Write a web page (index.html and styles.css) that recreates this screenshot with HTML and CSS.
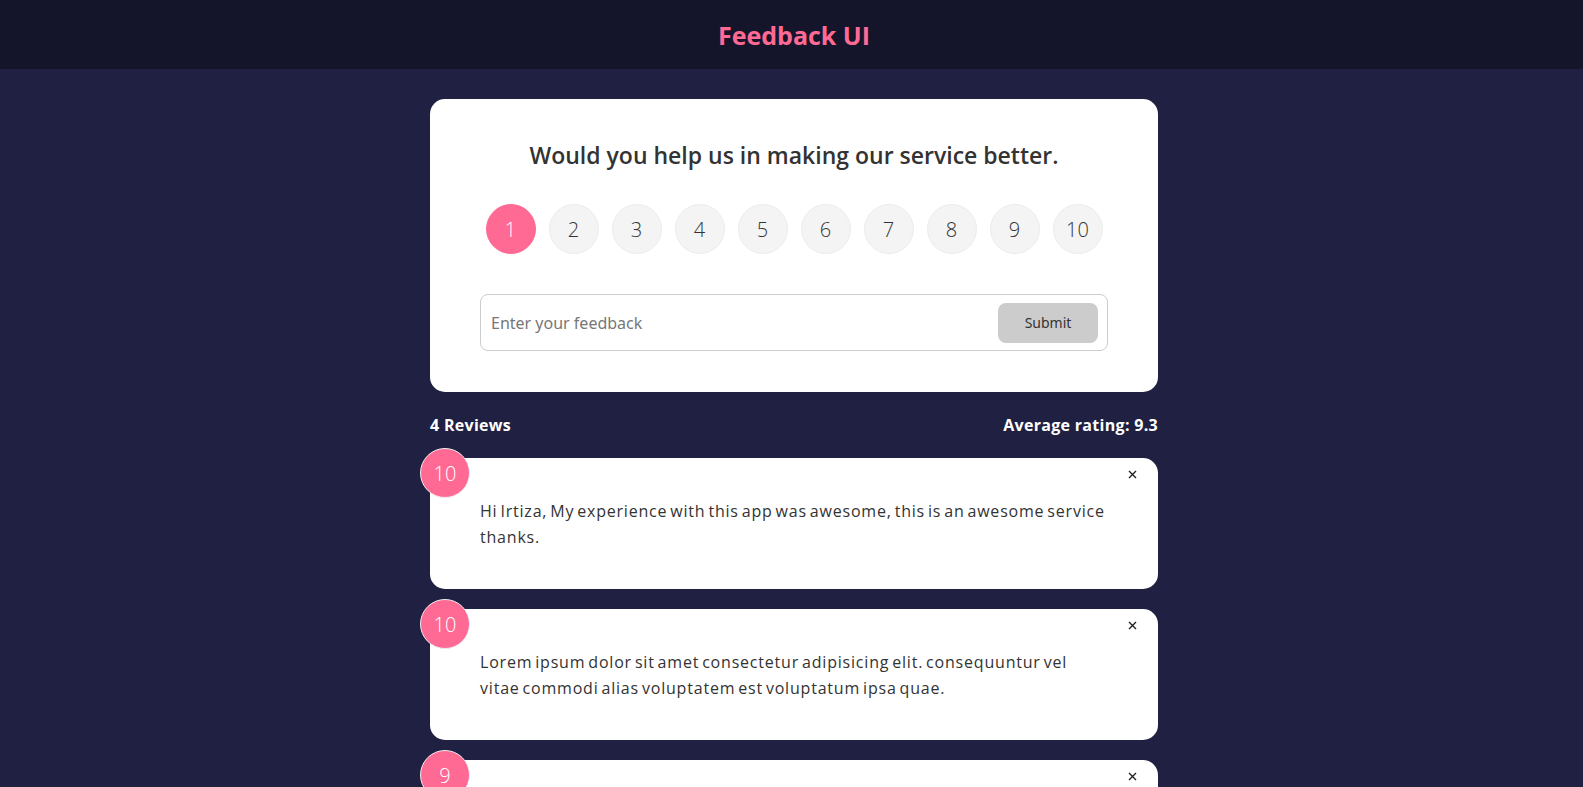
FILE: index.html
```html
<!DOCTYPE html>
<html lang="en">
<head>
<meta charset="UTF-8">
<title>Feedback UI</title>
<link rel="stylesheet" href="styles.css">
</head>
<body>
<header class="topbar">
  <h1 class="brand">Feedback UI</h1>
</header>
<main class="page">
  <div class="container">
    <section class="card rating-card">
      <h2 class="question">Would you help us in making our service better.</h2>
      <ul class="ratings">
        <li class="rate selected">1</li>
        <li class="rate">2</li>
        <li class="rate">3</li>
        <li class="rate">4</li>
        <li class="rate">5</li>
        <li class="rate">6</li>
        <li class="rate">7</li>
        <li class="rate">8</li>
        <li class="rate">9</li>
        <li class="rate">10</li>
      </ul>
      <form class="input-group">
        <input class="feedback-input" type="text" placeholder="Enter your feedback">
        <button class="submit" type="button">Submit</button>
      </form>
    </section>

    <div class="stats">
      <h4>4 Reviews</h4>
      <h4>Average rating: 9.3</h4>
    </div>

    <div class="review card">
      <div class="badge">10</div>
      <button class="close" type="button" aria-label="Remove"><svg width="9" height="9" viewBox="0 0 9 9"><path d="M1 1L8 8M8 1L1 8" stroke="#222" stroke-width="1.4" fill="none"/></svg></button>
      <p class="review-text">Hi Irtiza, My experience with this app was awesome, this is an awesome service thanks.</p>
    </div>

    <div class="review card">
      <div class="badge">10</div>
      <button class="close" type="button" aria-label="Remove"><svg width="9" height="9" viewBox="0 0 9 9"><path d="M1 1L8 8M8 1L1 8" stroke="#222" stroke-width="1.4" fill="none"/></svg></button>
      <p class="review-text">Lorem ipsum dolor sit amet consectetur adipisicing elit. consequuntur vel vitae commodi alias voluptatem est voluptatum ipsa quae.</p>
    </div>

    <div class="review card">
      <div class="badge">9</div>
      <button class="close" type="button" aria-label="Remove"><svg width="9" height="9" viewBox="0 0 9 9"><path d="M1 1L8 8M8 1L1 8" stroke="#222" stroke-width="1.4" fill="none"/></svg></button>
      <p class="review-text">Lorem ipsum dolor sit amet consectetur adipisicing elit. consequuntur vel vitae commodi alias voluptatem est voluptatum ipsa quae.</p>
    </div>

    <div class="review card">
      <div class="badge">8</div>
      <button class="close" type="button" aria-label="Remove"><svg width="9" height="9" viewBox="0 0 9 9"><path d="M1 1L8 8M8 1L1 8" stroke="#222" stroke-width="1.4" fill="none"/></svg></button>
      <p class="review-text">Lorem ipsum dolor sit amet consectetur adipisicing elit. consequuntur vel vitae commodi alias voluptatem est voluptatum ipsa quae.</p>
    </div>
  </div>
</main>
</body>
</html>
```
FILE: styles.css
```css
* {
  box-sizing: border-box;
}

body {
  margin: 0;
  background: #202142;
  font-family: "Open Sans", "Noto Sans", sans-serif;
  color: #333;
}

.topbar {
  height: 69px;
  background: #14152a;
  display: flex;
  align-items: center;
  justify-content: center;
  padding-left: 5px;
}

.brand {
  margin: 0;
  font-size: 25px;
  font-weight: 700;
  color: #ff6a95;
  line-height: 30px;
}

.page {
  display: flex;
  justify-content: center;
  padding: 30px 0 40px 5px;
}

.container {
  width: 728px;
}

.card {
  background: #fff;
  border-radius: 15px;
}

.rating-card {
  padding: 38px 50px 41px;
}

.question {
  margin: 0;
  font-size: 23px;
  line-height: 37px;
  font-weight: 600;
  text-align: center;
  color: #333;
}

.ratings {
  list-style: none;
  margin: 30px 0 0;
  padding: 0;
  display: flex;
  justify-content: center;
  gap: 13px;
}

.rate {
  width: 50px;
  height: 50px;
  border-radius: 50%;
  background: #f4f4f4;
  border: 1px solid #ececec;
  display: flex;
  align-items: center;
  justify-content: center;
  font-size: 20px;
  font-weight: 300;
  color: #333;
}

.rate.selected {
  background: #ff6a95;
  border-color: #ff6a95;
  color: #fff;
}

.input-group {
  margin-top: 40px;
  height: 57px;
  border: 1px solid #ccc;
  border-radius: 8px;
  display: flex;
  align-items: center;
  padding: 0 10px;
}

.feedback-input {
  flex: 1;
  border: none;
  outline: none;
  font-family: "Noto Sans", "Open Sans", sans-serif;
  font-size: 16px;
  color: #333;
  padding: 0;
  background: transparent;
}

.feedback-input::placeholder {
  color: #777;
}

.submit {
  width: 100px;
  height: 40px;
  border: none;
  border-radius: 8px;
  background: #ccc;
  color: #333;
  font-family: "Noto Sans", "Open Sans", sans-serif;
  font-size: 14px;
  margin-right: -1px;
}

.stats {
  display: flex;
  justify-content: space-between;
  align-items: center;
  margin: 21px 0 21px;
  color: #fff;
}

.stats h4 {
  margin: 0;
  font-size: 16px;
  line-height: 24px;
  font-weight: 700;
  letter-spacing: 0.3px;
}

.review {
  position: relative;
  padding: 41px 50px 39px;
  margin-bottom: 20px;
}

.review-text {
  margin: 0;
  font-size: 16px;
  line-height: 25.6px;
  letter-spacing: 0.8px;
  word-spacing: -2px;
  color: #333;
}

.badge {
  position: absolute;
  top: -10px;
  left: -10px;
  width: 50px;
  height: 50px;
  border-radius: 50%;
  background: #ff6a95;
  border: 1px solid #eee;
  color: #fff;
  display: flex;
  align-items: center;
  justify-content: center;
  font-size: 20px;
  font-weight: 300;
}

.close {
  position: absolute;
  top: 12px;
  right: 20px;
  padding: 0;
  border: none;
  background: none;
  width: 11px;
  height: 9px;
  display: flex;
  align-items: center;
  justify-content: center;
  cursor: pointer;
}
```
